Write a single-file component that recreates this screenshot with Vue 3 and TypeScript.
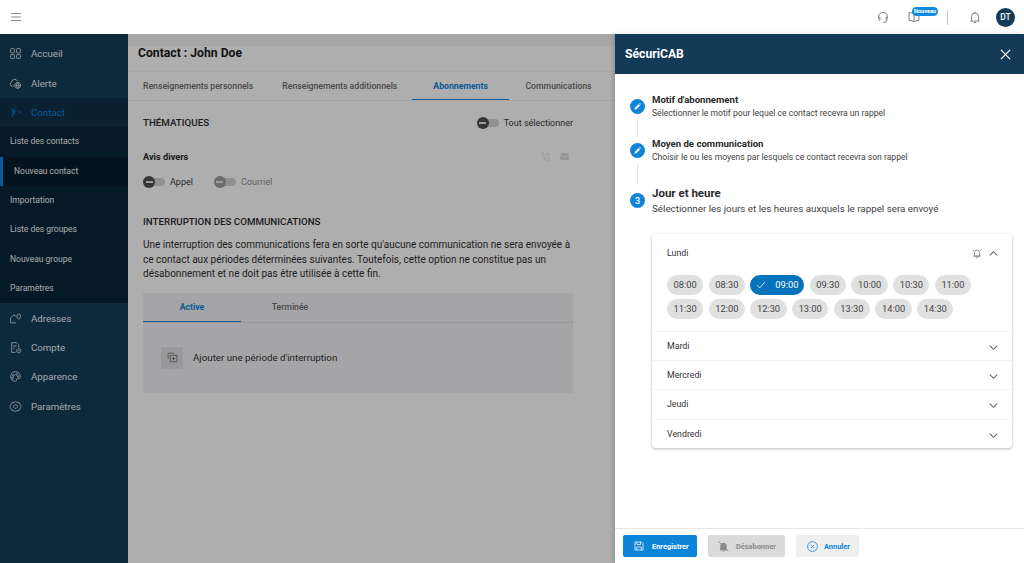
<template>
  <div class="page">
    <header class="topbar">
      <svg class="burger" viewBox="0 0 12 10" width="12" height="10"><path d="M1 1.500h10M1 5h10M1 8.500h10" /></svg>
      <div class="top-actions">
        <svg class="ticon headset" viewBox="0 0 24 24" width="14" height="14">
          <path d="M4.500 15v-3.500a7.500 7.500 0 0 1 15 0V15M4.500 12.500h2.200v5H5.500a2 2 0 0 1-1-.4M19.500 12.500h-2.200v5h1.200a2 2 0 0 0 1-.4M18 17.500v1a2.500 2.500 0 0 1-2.500 2.500H12" />
        </svg>
        <div class="book-wrap">
          <svg class="ticon" viewBox="0 0 24 24" width="14" height="14">
            <path d="M12 6.500C10 5 7 4.500 3.500 4.500v13.500c3.500 0 6.500.5 8.500 2 2-1.500 5-2 8.500-2V4.500C17 4.500 14 5 12 6.500zM12 6.500V20" />
          </svg>
          <span class="badge">Nouveau</span>
        </div>
        <span class="divider"></span>
        <svg class="ticon" viewBox="0 0 24 24" width="14" height="14">
          <path d="M6 17.500V11a6 6 0 0 1 12 0v6.500l1.500 1.500h-15zM10 21.500h4M12 3v2" />
        </svg>
        <span class="avatar">DT</span>
      </div>
    </header>

    <div class="body-row">
      <nav class="sidebar">
        <template v-for="item in navItems" :key="item.label">
          <div class="nav-row" :class="{ active: item.label === 'Contact' }">
            <svg viewBox="0 0 24 24" width="13" height="13"><path :d="item.icon" /></svg>
            <span>{{ item.label }}</span>
          </div>
          <div v-if="item.label === 'Contact'" class="subnav">
            <div
              v-for="sub in subItems"
              :key="sub"
              class="sub-row"
              :class="{ current: sub === 'Nouveau contact' }"
            >
              {{ sub }}
            </div>
          </div>
        </template>
      </nav>

      <main class="content">
        <div class="strip"></div>
        <h1 class="title-card">Contact : John Doe</h1>
        <div class="tabs">
          <span v-for="tab in tabs" :key="tab" class="tab" :class="{ on: tab === 'Abonnements' }">{{ tab }}</span>
        </div>

        <section class="panel">
          <div class="theme-head">
            <h2>THÉMATIQUES</h2>
            <label class="toggle-label">
              <span class="toggle"><i></i></span>
              Tout sélectionner
            </label>
          </div>
          <div class="avis-head">
            <strong>Avis divers</strong>
            <div class="avis-icons">
              <svg viewBox="0 0 24 24" width="11" height="11">
                <path d="M6.500 3l3 5-2 2c1 2.500 3.500 5 6 6l2-2 5 3c-.5 2-2 3.500-4 3.500C10 20.500 3.500 14 3.500 7c0-2 1-3.500 3-4zM14 3.500a7 7 0 0 1 6.500 6.500M14 7a3.500 3.500 0 0 1 3 3" />
              </svg>
              <svg viewBox="0 0 24 24" width="11" height="11" class="filled">
                <path d="M3 5h18v2.500l-9 5.500-9-5.500zM3 10l9 5.500 9-5.500v9H3z" />
              </svg>
            </div>
          </div>
          <div class="channels">
            <label class="toggle-label"><span class="toggle"><i></i></span>Appel</label>
            <label class="toggle-label off"><span class="toggle"><i></i></span>Courriel</label>
          </div>

          <h3>INTERRUPTION DES COMMUNICATIONS</h3>
          <p>
            Une interruption des communications fera en sorte qu'aucune communication ne sera envoyée à
            ce contact aux périodes déterminées suivantes. Toutefois, cette option ne constitue pas un
            désabonnement et ne doit pas être utilisée à cette fin.
          </p>

          <div class="interrupt">
            <div class="int-tabs">
              <span class="int-tab on">Active</span>
              <span class="int-tab">Terminée</span>
            </div>
            <div class="int-body">
              <span class="add-box">
                <svg viewBox="0 0 24 24" width="13" height="13">
                  <path d="M4 15V5a1 1 0 0 1 1-1h10M8 8h12v12H8zM14 11v6M11 14h6" />
                </svg>
              </span>
              Ajouter une période d'interruption
            </div>
          </div>
        </section>
      </main>
    </div>

    <div class="overlay"></div>

    <aside class="drawer">
      <div class="drawer-head">
        <span>SécuriCAB</span>
        <svg viewBox="0 0 12 12" width="11" height="11"><path d="M1 1l10 10M11 1L1 11" /></svg>
      </div>

      <div class="drawer-body">
        <div class="step">
          <span class="dot">
            <svg viewBox="0 0 12 12" width="9" height="9"><path d="M2 10l.5-2.500 5-5 2 2-5 5zM8.300 1.700l.6-.6 2 2-.6.6z" /></svg>
          </span>
          <div>
            <h4>Motif d'abonnement</h4>
            <small>Sélectionner le motif pour lequel ce contact recevra un rappel</small>
          </div>
        </div>
        <span class="line line-a"></span>
        <div class="step">
          <span class="dot">
            <svg viewBox="0 0 12 12" width="9" height="9"><path d="M2 10l.5-2.500 5-5 2 2-5 5zM8.300 1.700l.6-.6 2 2-.6.6z" /></svg>
          </span>
          <div>
            <h4>Moyen de communication</h4>
            <small>Choisir le ou les moyens par lesquels ce contact recevra son rappel</small>
          </div>
        </div>
        <span class="line line-b"></span>
        <div class="step big">
          <span class="dot">3</span>
          <div>
            <h4>Jour et heure</h4>
            <small>Sélectionner les jours et les heures auxquels le rappel sera envoyé</small>
          </div>
        </div>

        <div class="accordion">
          <div class="day-open">
            <div class="day-head">
              <span>Lundi</span>
              <span class="day-icons">
                <svg viewBox="0 0 24 24" width="12" height="12" class="alarm">
                  <path d="M7 18v-7a5 5 0 0 1 10 0v7zM5 18.500h14M10.500 21.500h3M3 5l3 2.500M21 5l-3 2.500" />
                </svg>
                <svg viewBox="0 0 12 12" width="11" height="11" class="chev"><path d="M2 8l4-4 4 4" /></svg>
              </span>
            </div>
            <div class="chips">
              <span v-for="t in slots" :key="t" class="chip" :class="{ picked: t === '09:00' }">
                <svg v-if="t === '09:00'" viewBox="0 0 12 12" width="10" height="10"><path d="M1.500 6.500l3 3 6-7" /></svg>
                {{ t }}
              </span>
            </div>
          </div>
          <div v-for="d in closedDays" :key="d" class="day-row">
            <span>{{ d }}</span>
            <svg viewBox="0 0 12 12" width="11" height="11" class="chev down"><path d="M2 4l4 4 4-4" /></svg>
          </div>
        </div>
      </div>

      <footer class="drawer-foot">
        <button class="btn primary">
          <svg viewBox="0 0 24 24" width="12" height="12">
            <path d="M4 4h13l3 3v13H4zM8 4v5h7V4M7.500 20v-6h9v6" />
          </svg>
          Enregistrer
        </button>
        <button class="btn disabled">
          <svg viewBox="0 0 24 24" width="13" height="13" class="bell-off">
            <path class="bell" d="M6 18V11c0-3 2.500-6 6-6s6 3 6 6v7l1.500 1.500h-15zM10 21h4v1h-4z" />
            <path d="M3 3l18 18" />
          </svg>
          Désabonner
        </button>
        <button class="btn ghost">
          <svg viewBox="0 0 24 24" width="13" height="13">
            <circle cx="12" cy="12" r="9" />
            <path d="M9 9l6 6M15 9l-6 6" />
          </svg>
          Annuler
        </button>
      </footer>
    </aside>
  </div>
</template>

<script setup lang="ts">
interface NavItem {
  label: string
  icon: string
}

const navItems: NavItem[] = [
  { label: 'Accueil', icon: 'M4 3h5a1 1 0 0 1 1 1v6a1 1 0 0 1-1 1H4a1 1 0 0 1-1-1V4a1 1 0 0 1 1-1zM15 3h5a1 1 0 0 1 1 1v6a1 1 0 0 1-1 1h-5a1 1 0 0 1-1-1V4a1 1 0 0 1 1-1zM4 14h5a1 1 0 0 1 1 1v5a1 1 0 0 1-1 1H4a1 1 0 0 1-1-1v-5a1 1 0 0 1 1-1zM15 14h5a1 1 0 0 1 1 1v5a1 1 0 0 1-1 1h-5a1 1 0 0 1-1-1v-5a1 1 0 0 1 1-1z' },
  { label: 'Alerte', icon: 'M9 17H6a4 4 0 0 1-1-7.800 5.500 5.500 0 0 1 10.500-1.700M16 10a5.500 5.500 0 1 0 .01 0zM11 15.500h10M16 10c-3 3-3 8 0 11M16 10c3 3 3 8 0 11' },
  { label: 'Contact', icon: 'M5 4l3 7-2 9M8 11l6-2M8 11l5 5M17 11h5M11 4l-3 7' },
  { label: 'Adresses', icon: 'M3 20V11l6-6 5 4M3 20h10M18 4a3.500 3.500 0 0 1 3.500 3.500c0 2.500-3.500 6-3.500 6s-3.500-3.500-3.500-6A3.500 3.500 0 0 1 18 4z' },
  { label: 'Compte', icon: 'M5 3h9l4 4v5M5 3v18h7M8 9h6M8 13h3M18 14a4 4 0 1 0 .01 0zM16 18h4' },
  { label: 'Apparence', icon: 'M12 3a9 9 0 1 0 0 18c2 0 2-1.500 1.500-2.500S13.500 16 16 16h2.500c1.500 0 2.500-1.500 2.500-4a9 9 0 0 0-9-9zM8 8.500a1.500 1.500 0 1 0 .01 0zM14 6.500a1.500 1.500 0 1 0 .01 0zM6.500 13.500a1.500 1.500 0 1 0 .01 0zM17 10.500a1.500 1.500 0 1 0 .01 0z' },
  { label: 'Paramètres', icon: 'M12 2.500l3 2.200 3.500-.3 1.200 3.300 2.800 2.300-1.500 2 1.500 2-2.800 2.300-1.200 3.300-3.500-.3-3 2.200-3-2.200-3.500.3-1.200-3.300L1.500 14l1.500-2-1.500-2 2.800-2.300 1.200-3.300 3.500.3zM12 8.500a3.500 3.500 0 1 0 .01 0z' },
]

const subItems = [
  'Liste des contacts',
  'Nouveau contact',
  'Importation',
  'Liste des groupes',
  'Nouveau groupe',
  'Paramètres',
]

const tabs = ['Renseignements personnels', 'Renseignements additionnels', 'Abonnements', 'Communications']

const slots = [
  '08:00', '08:30', '09:00', '09:30', '10:00', '10:30', '11:00',
  '11:30', '12:00', '12:30', '13:00', '13:30', '14:00', '14:30',
]

const closedDays = ['Mardi', 'Mercredi', 'Jeudi', 'Vendredi']
</script>

<style>
html,
body {
  margin: 0;
  background: #fff;
}
</style>

<style scoped>
.page {
  position: relative;
  width: 1024px;
  height: 563px;
  overflow: hidden;
  font-family: Roboto, "Liberation Sans", sans-serif;
  color: #2b2b2b;
  background: #fafafa;
}
svg {
  fill: none;
  stroke: currentColor;
  stroke-width: 1.500;
  flex: none;
}
.topbar {
  height: 34px;
  display: flex;
  align-items: center;
  justify-content: space-between;
  padding: 0 9px 0 10px;
  background: #fff;
  box-sizing: border-box;
}
.burger {
  color: #8c8c8c;
  stroke-width: 1;
}
.top-actions {
  display: flex;
  align-items: center;
}
.ticon {
  color: #6f6f6f;
}
.headset {
  margin-right: 17px;
}
.book-wrap {
  position: relative;
  display: flex;
  margin-right: 26px;
}
.badge {
  position: absolute;
  left: 5px;
  top: -3px;
  width: 26px;
  height: 9px;
  border-radius: 5px;
  background: #0f8ae0;
  color: #fff;
  font-size: 5.500px;
  font-weight: 700;
  line-height: 9px;
  text-align: center;
}
.divider {
  width: 1px;
  height: 15px;
  background: #c8c8c8;
  margin-right: 20px;
}
.avatar {
  width: 19px;
  height: 19px;
  margin-left: 14px;
  border-radius: 50%;
  background: #133b57;
  color: #fff;
  font-size: 8.500px;
  font-weight: 500;
  line-height: 19px;
  text-align: center;
}
.body-row {
  display: flex;
  height: 529px;
}
.sidebar {
  width: 128px;
  flex: none;
  padding-top: 5.300px;
  box-sizing: border-box;
  background: #133b57;
  color: #e6e6e6;
  font-size: 10px;
}
.nav-row {
  height: 29.350px;
  display: flex;
  align-items: center;
  gap: 9px;
  padding-left: 9px;
  font-size: 9.700px;
  color: #e8edf0;
}
.nav-row svg {
  stroke-width: 1.500;
  color: #dfe5ea;
}
.nav-row.active {
  background: #0e3048;
  color: #0e84d8;
}
.nav-row.active svg {
  color: #0e84d8;
}
.subnav {
  background: #082438;
}
.sub-row {
  height: 29.350px;
  line-height: 29.350px;
  padding-left: 10px;
  font-size: 8.500px;
  color: #eef1f3;
}
.sub-row.current {
  padding-left: 14px;
  box-shadow: inset 3px 0 0 #0e84d8;
  background: #061c2c;
}
.content {
  flex: 1;
  display: flex;
  flex-direction: column;
  padding-right: 7px;
  min-width: 0;
  background: #fafafa;
}
.strip {
  height: 12px;
  margin-right: -7px;
  background: #f0f0f0;
}
.title-card {
  margin: 0;
  height: 26px;
  line-height: 14px;
  padding-left: 10px;
  font-size: 12.200px;
  font-weight: 700;
  color: #1a1a1a;
  border-radius: 0 0 6px 0;
  border-bottom: 1px solid #f0f0f0;
  box-sizing: border-box;
}
.tabs {
  display: flex;
  height: 29px;
  border-bottom: 1px solid #ececec;
  box-sizing: border-box;
  font-size: 8.700px;
  color: #6b6b6b;
  font-weight: 500;
}
.tab {
  padding: 0 14.500px;
  line-height: 28px;
  white-space: nowrap;
}
.tab:first-child {
  padding-left: 15px;
}
.tab:last-child {
  padding-left: 16px;
}
.tab.on {
  color: #0e84d8;
  padding: 0 21.500px;
  border-bottom: 1.500px solid #0e84d8;
  font-weight: 700;
}
.panel {
  width: 430px;
  margin-left: 15px;
}
.theme-head {
  height: 43px;
  display: flex;
  align-items: center;
  justify-content: space-between;
}
h2,
h3 {
  margin: 0;
  font-size: 9.750px;
  font-weight: 500;
  color: #2b2b2b;
}
.toggle-label {
  display: inline-flex;
  align-items: center;
  gap: 5px;
  font-size: 9px;
  color: #3a3a3a;
}
.toggle-label.off {
  color: #8a8a8a;
}
.toggle {
  position: relative;
  width: 22px;
  height: 8px;
  border-radius: 4px;
  background: #cfcfcf;
}
.toggle i {
  position: absolute;
  left: 0;
  top: -2px;
  width: 12px;
  height: 12px;
  border-radius: 50%;
  background: #4c4c4c;
}
.off .toggle i {
  background: #9a9a9a;
}
.toggle i::after {
  content: "";
  position: absolute;
  left: 2.500px;
  top: 5px;
  width: 7px;
  height: 2px;
  background: #e0e0e0;
}
.avis-head {
  margin-top: 5px;
  display: flex;
  align-items: center;
  justify-content: space-between;
  font-size: 9.200px;
  height: 14px;
}
.avis-head strong {
  font-weight: 700;
}
.avis-icons {
  display: flex;
  gap: 8px;
  margin-right: 3px;
  color: #d0d0d0;
}
.filled {
  fill: currentColor;
  stroke: none;
}
.channels {
  display: flex;
  gap: 21px;
  margin-top: 12px;
  height: 14px;
  align-items: center;
}
h3 {
  margin-top: 26px;
  line-height: 14px;
}
p {
  margin: 9px 0 11px;
  font-size: 10px;
  line-height: 14.700px;
  color: #2f2f2f;
}
.interrupt {
  height: 100px;
  background: #ededf0;
}
.int-tabs {
  display: flex;
  height: 29.500px;
  box-sizing: border-box;
  border-bottom: 1px solid #dcdcdf;
}
.int-tab {
  width: 98px;
  line-height: 29px;
  text-align: center;
  font-size: 8.700px;
  font-weight: 500;
  color: #6b6b6b;
  box-sizing: border-box;
}
.int-tab.on {
  color: #0e84d8;
  font-weight: 700;
  border-bottom: 1.500px solid #0e84d8;
}
.int-body {
  height: 70px;
  display: flex;
  align-items: center;
  gap: 10px;
  padding-left: 18px;
  font-size: 9.750px;
  color: #2f2f2f;
}
.add-box {
  width: 22px;
  height: 22px;
  border-radius: 2px;
  background: #dcdcdf;
  color: #6b6b6b;
  display: flex;
  align-items: center;
  justify-content: center;
}
.overlay {
  position: absolute;
  left: 0;
  right: 0;
  top: 34px;
  bottom: 0;
  background: rgba(0, 0, 0, 0.3);
}
.drawer {
  position: absolute;
  left: 615px;
  right: 0;
  top: 34px;
  bottom: 0;
  display: flex;
  flex-direction: column;
  background: #fff;
  box-shadow: -2px 0 4px rgba(0, 0, 0, 0.15);
}
.drawer-head {
  height: 40px;
  flex: none;
  display: flex;
  align-items: center;
  justify-content: space-between;
  padding: 0 13px 0 10px;
  background: #133b57;
  color: #fff;
  font-size: 12.200px;
  font-weight: 700;
}
.drawer-head svg {
  stroke-width: 1.300;
}
.drawer-body {
  flex: 1;
  padding: 19px 12px 0 15px;
  min-height: 0;
}
.step {
  display: flex;
  align-items: center;
  gap: 7px;
}
.dot {
  width: 15px;
  height: 15px;
  flex: none;
  border-radius: 50%;
  background: #0e84d8;
  color: #fff;
  font-size: 9px;
  font-weight: 500;
  display: flex;
  align-items: center;
  justify-content: center;
}
.dot svg {
  fill: #fff;
  stroke: none;
}
h4 {
  margin: 0;
  font-size: 9.600px;
  line-height: 13px;
  font-weight: 700;
  color: #2a2a2a;
}
small {
  display: block;
  margin-top: 1px;
  font-size: 8.600px;
  line-height: 13px;
  color: #3f3f3f;
}
.big h4 {
  font-size: 11.500px;
  line-height: 16px;
}
.big small {
  font-size: 9.800px;
  line-height: 14px;
}
.line {
  display: block;
  width: 1px;
  margin-left: 7px;
  background: #e6e6e6;
}
.line-a {
  height: 17px;
}
.line-b {
  height: 21px;
}
.accordion {
  margin: 18px 0 0 22px;
  border-radius: 3px;
  box-shadow: 0 1px 3px rgba(0, 0, 0, 0.28);
  font-size: 8.800px;
  color: #333;
}
.day-head {
  height: 38px;
  display: flex;
  align-items: center;
  justify-content: space-between;
  padding: 0 13px 0 15px;
}
.day-icons {
  display: flex;
  align-items: center;
  gap: 5px;
  color: #777;
}
.alarm {
  stroke-width: 1.600;
}
.chev {
  color: #666;
  stroke-width: 1.200;
}
.chev.down {
  margin-top: 3px;
}
.chips {
  display: flex;
  flex-wrap: wrap;
  gap: 4px 5.400px;
  width: 320px;
  padding: 3px 0 12px 15px;
}
.chip {
  width: 36.300px;
  height: 20px;
  border-radius: 10px;
  background: #e0e0e0;
  color: #444;
  font-size: 9.300px;
  line-height: 20px;
  text-align: center;
  display: flex;
  align-items: center;
  justify-content: center;
  gap: 9px;
}
.chip.picked {
  width: 54px;
  background: #0472bc;
  color: #fff;
}
.chip.picked svg {
  stroke-width: 1;
}
.day-row {
  height: 29.200px;
  box-sizing: border-box;
  display: flex;
  align-items: center;
  justify-content: space-between;
  padding: 0 13px 0 15px;
  border-top: 1px solid #f1f3f5;
}
.drawer-foot {
  height: 34px;
  flex: none;
  display: flex;
  align-items: center;
  gap: 11px;
  padding: 0 0 0 8px;
  border-top: 1px solid #e6e6e6;
}
.btn {
  height: 22px;
  border: 0;
  border-radius: 2px;
  display: flex;
  align-items: center;
  font-family: inherit;
  font-size: 7.400px;
  font-weight: 700;
  padding: 0 0 0 10px;
}
.primary {
  width: 74px;
  gap: 7px;
  background: #0e84d8;
  color: #fff;
}
.disabled {
  width: 77px;
  gap: 6px;
  padding-left: 9px;
  background: #dadada;
  color: #8a8a8a;
}
.bell-off .bell {
  fill: currentColor;
  stroke: none;
}
.ghost {
  width: 63px;
  gap: 5px;
  background: #efefef;
  color: #0e84d8;
}
</style>
